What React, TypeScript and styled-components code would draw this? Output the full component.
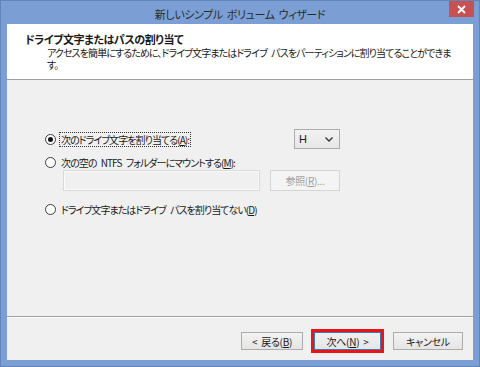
import styled, { createGlobalStyle } from 'styled-components';

const GlobalStyle = createGlobalStyle`
    html, body {
        margin: 0;
        padding: 0;
        background: #7b9fd4;
    }
    body {
        font-family: "Noto Sans CJK JP", "Noto Sans", sans-serif;
        font-feature-settings: "palt";
        color: #1a1a1a;
    }
`;

const Window = styled.div`
    width: 480px;
    height: 367px;
    box-sizing: border-box;
    display: flex;
    flex-direction: column;
    background: #7b9fd4;
    border: 1px solid #6284bd;
    padding: 0 6px 6px;
`;

const TitleBar = styled.div`
    height: 23px;
    display: grid;
    grid-template-columns: 1fr auto 1fr;
    align-items: start;
`;

const Title = styled.div`
    grid-column: 2;
    font-size: 11px;
    line-height: 12px;
    margin-top: 7px;
    color: #2b2b2b;
    letter-spacing: -0.4px;
    word-spacing: 2px;
`;

const CloseButton = styled.div`
    grid-column: 3;
    justify-self: end;
    width: 25px;
    height: 16px;
    margin-right: -1px;
    background: #c75050;
    display: flex;
    align-items: center;
    justify-content: center;
`;

const Client = styled.div`
    flex: 1;
    display: flex;
    flex-direction: column;
    background: #f0f0f0;
`;

const Header = styled.div`
    height: 56px;
    box-sizing: border-box;
    background: #fff;
    border-bottom: 1px solid #a0a0a0;
    padding: 8px 0 0 18px;
`;

const HeaderTitle = styled.div`
    font-size: 11px;
    font-weight: bold;
    line-height: 14px;
    letter-spacing: -0.45px;
`;

const HeaderDesc = styled.div`
    margin-left: 22px;
    font-size: 10px;
    line-height: 12px;
    margin-top: 1px;
    letter-spacing: -0.9px;
    word-spacing: 3px;
    white-space: nowrap;
`;

const Body = styled.div`
    flex: 1;
    padding: 49px 0 0 38px;
`;

const Options = styled.div`
    width: 295px;
    display: flex;
    flex-direction: column;
`;

const Row = styled.div<{ $top?: number; $indent?: number }>`
    display: flex;
    align-items: center;
    justify-content: space-between;
    margin-top: ${p => p.$top || 0}px;
    padding-left: ${p => p.$indent || 0}px;
`;

const RadioLabel = styled.label`
    display: flex;
    align-items: center;
    font-size: 10px;
    line-height: 13px;
    letter-spacing: -0.95px;
    word-spacing: 3px;
    white-space: nowrap;
`;

const RadioCircle = styled.span<{ $checked?: boolean }>`
    width: 11px;
    height: 11px;
    box-sizing: border-box;
    border-radius: 50%;
    border: 1px solid #3c3c3c;
    background: #fff;
    margin-right: 3px;
    display: flex;
    align-items: center;
    justify-content: center;

    &::after {
        content: '';
        display: ${p => (p.$checked ? 'block' : 'none')};
        width: 5px;
        height: 5px;
        border-radius: 50%;
        background: #111;
    }
`;

const LabelText = styled.span<{ $focus?: boolean }>`
    padding: 0 1px;
    border: 1px dotted ${p => (p.$focus ? '#333' : 'transparent')};
`;

const Select = styled.div`
    width: 46px;
    height: 20px;
    box-sizing: border-box;
    border: 1px solid #acacac;
    background: linear-gradient(#f2f2f2, #e6e6e6);
    display: flex;
    align-items: center;
    justify-content: space-between;
    padding: 0 6px 0 4px;
    font-family: "Liberation Sans", sans-serif;
    font-size: 11px;
`;

const TextField = styled.div`
    width: 197px;
    height: 21px;
    box-sizing: border-box;
    border: 1px solid #d9d9d9;
    background: #f0f0f0;
    box-shadow: inset 0 0 0 1px #fafafa;
`;

const BrowseButton = styled.div`
    width: 70px;
    height: 21px;
    box-sizing: border-box;
    border: 1px solid #d5d5d5;
    background: #f4f4f4;
    color: #a0a0a0;
    font-size: 10px;
    letter-spacing: -0.3px;
    display: flex;
    align-items: center;
    justify-content: center;
`;

const Footer = styled.div`
    height: 44px;
    box-sizing: border-box;
    border-top: 1px solid #a0a0a0;
    box-shadow: inset 0 1px #fff;
    display: flex;
    justify-content: flex-end;
    align-items: flex-start;
    padding: 15px 10px 0 0;
`;

const Button = styled.div<{ $width: number; $gap?: number; $primary?: boolean }>`
    width: ${p => p.$width}px;
    height: 18px;
    box-sizing: border-box;
    margin-left: ${p => p.$gap || 0}px;
    border: 1px solid ${p => (p.$primary ? '#3d7bad' : '#acacac')};
    background: linear-gradient(#f2f2f2, #e5e5e5);
    font-size: 10px;
    letter-spacing: -0.3px;
    word-spacing: 2px;
    display: flex;
    align-items: center;
    justify-content: center;
    outline: ${p => (p.$primary ? '3px solid #e8151b' : 'none')};
`;

const U = styled.span`
    text-decoration: underline;
`;

export default function App() {
    return (
        <>
            <GlobalStyle />
            <Window>
                <TitleBar>
                    <Title>新しいシンプル ボリューム ウィザード</Title>
                    <CloseButton>
                        <svg width="9" height="9" viewBox="0 0 9 9">
                            <path d="M1 1 L8 8 M8 1 L1 8" stroke="#fff" strokeWidth="1.8" />
                        </svg>
                    </CloseButton>
                </TitleBar>
                <Client>
                    <Header>
                        <HeaderTitle>ドライブ文字またはパスの割り当て</HeaderTitle>
                        <HeaderDesc>
                            アクセスを簡単にするために、ドライブ文字またはドライブ パスをパーティションに割り当てることができま
                            <br />
                            す。
                        </HeaderDesc>
                    </Header>
                    <Body>
                        <Options>
                            <Row>
                                <RadioLabel>
                                    <RadioCircle $checked />
                                    <LabelText $focus>次のドライブ文字を割り当てる(<U>A</U>):</LabelText>
                                </RadioLabel>
                                <Select>
                                    <span>H</span>
                                    <svg width="8" height="5" viewBox="0 0 8 5">
                                        <path d="M0.5 0.5 L4 4 L7.5 0.5" stroke="#333" strokeWidth="1.3" fill="none" />
                                    </svg>
                                </Select>
                            </Row>
                            <Row $top={6}>
                                <RadioLabel>
                                    <RadioCircle />
                                    <LabelText>次の空の NTFS フォルダーにマウントする(<U>M</U>):</LabelText>
                                </RadioLabel>
                            </Row>
                            <Row $indent={18}>
                                <TextField />
                                <BrowseButton>参照(<U>R</U>)...</BrowseButton>
                            </Row>
                            <Row $top={11}>
                                <RadioLabel>
                                    <RadioCircle />
                                    <LabelText>ドライブ文字またはドライブ パスを割り当てない(<U>D</U>)</LabelText>
                                </RadioLabel>
                            </Row>
                        </Options>
                    </Body>
                    <Footer>
                        <Button $width={62}>&lt; 戻る(<U>B</U>)</Button>
                        <Button $width={67} $gap={11} $primary>次へ(<U>N</U>) &gt;</Button>
                        <Button $width={70} $gap={12}>キャンセル</Button>
                    </Footer>
                </Client>
            </Window>
        </>
    );
}
